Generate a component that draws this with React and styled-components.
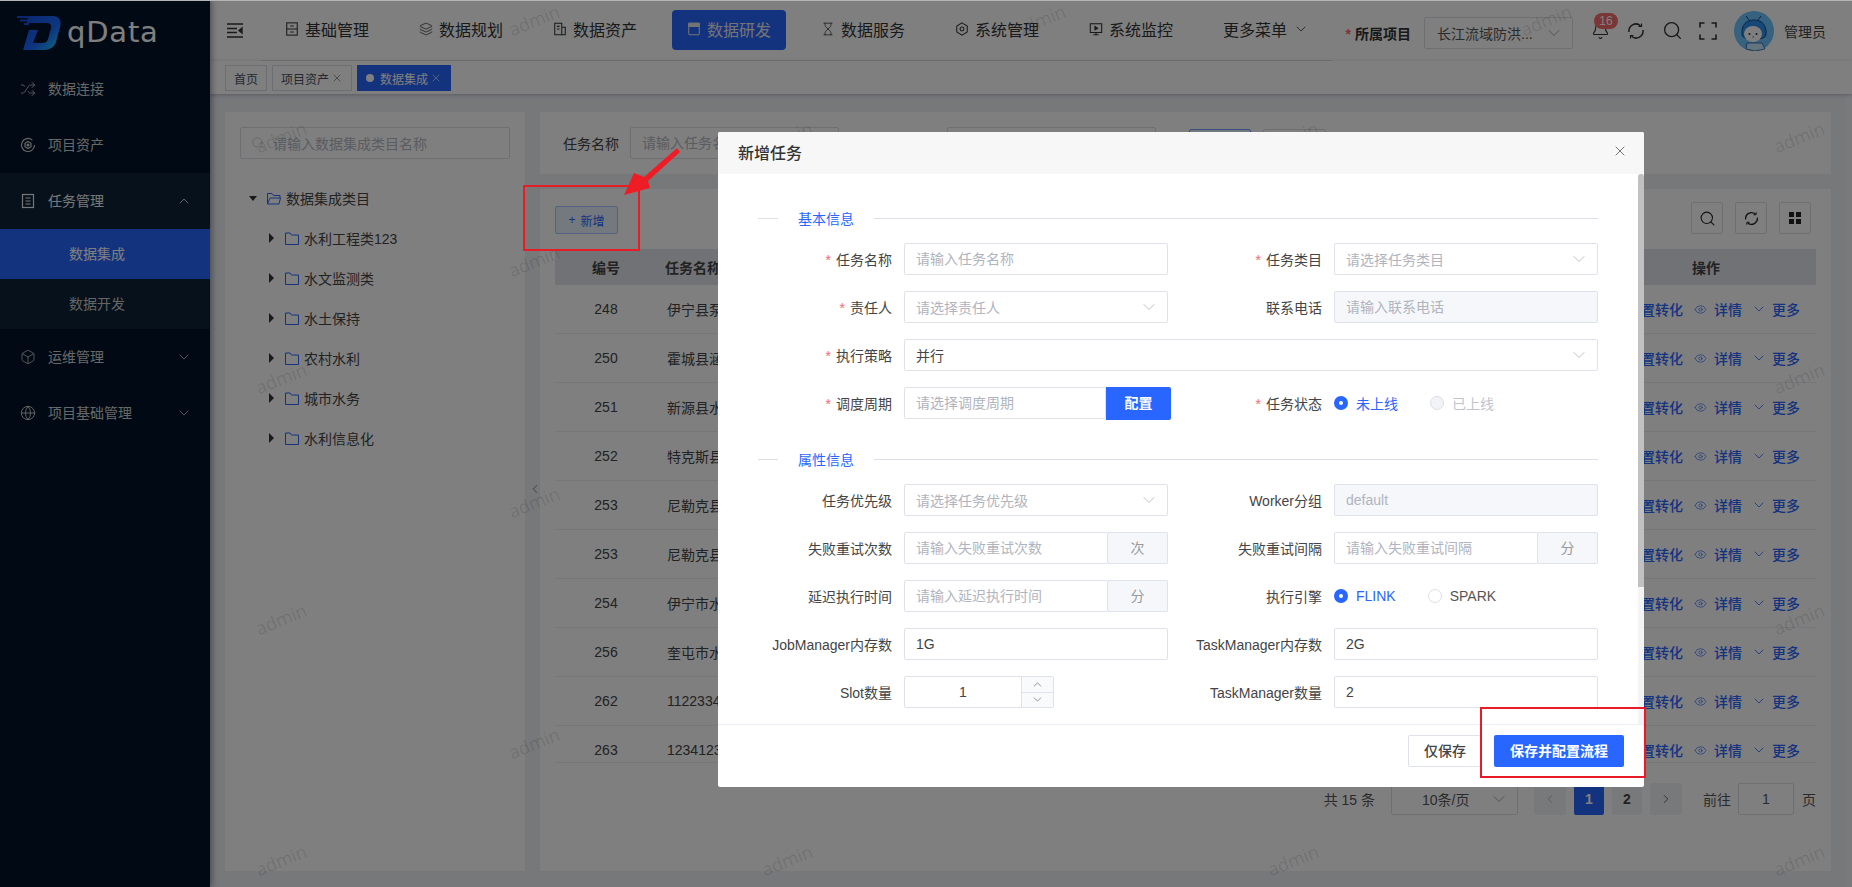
import React from "react";
import styled, { createGlobalStyle } from "styled-components";
import {
  Bell,
  Box,
  ChevronDown,
  ChevronLeft,
  ChevronRight,
  ChevronUp,
  Eye,
  Globe,
  Hourglass,
  Layers,
  Search,
  Shuffle,
  X,
} from "lucide-react";

const BLUE = "#2866ff";
const FONT = '"Liberation Sans", "Noto Sans CJK SC", sans-serif';

const GlobalStyle = createGlobalStyle`
  html, body { margin: 0; height: 100%; overflow: hidden; }
  body { font-family: ${FONT}; font-size: 14px; color: #333; }
  *, *::before, *::after { box-sizing: border-box; }
  input { font-family: ${FONT}; }
`;

const Page = styled.div`
  position: relative;
  display: flex;
  height: 100vh;
  background: #eef0f5;
`;

/* sidebar */
const Sidebar = styled.aside`
  flex: none;
  width: 210px;
  background: #021428;
  box-shadow: 2px 0 6px rgba(0, 21, 41, 0.4);
  position: relative;
  z-index: 2;
`;
const LogoBar = styled.div`
  height: 61px;
  display: flex;
  align-items: flex-start;
  padding: 16px 0 0 17px;
`;
const LogoText = styled.span`
  margin-left: 6px;
  font-family: "DejaVu Sans", sans-serif;
  font-size: 29px;
  letter-spacing: 0.8px;
  line-height: 32px;
  color: #fff;
`;
const MenuItem = styled.div`
  height: 56px;
  display: flex;
  align-items: center;
  gap: 12px;
  padding: 0 18px 0 20px;
  color: ${(p) => (p.$open ? "#f0f0f0" : "#d0d0d0")};
  background: ${(p) => (p.$open ? "#0e2236" : "transparent")};
  & > span {
    flex: 1;
    padding-bottom: 2px;
  }
`;
const SubItem = styled.div`
  height: 50px;
  display: flex;
  align-items: center;
  padding: 0 0 2px 69px;
  color: ${(p) => (p.$active ? "#fff" : "#c8c8c8")};
  background: ${(p) => (p.$active ? BLUE : "#0e2236")};
`;

/* header */
const Main = styled.div`
  flex: 1;
  min-width: 0;
  display: flex;
  flex-direction: column;
`;
const Header = styled.header`
  height: 61px;
  flex: none;
  display: flex;
  align-items: center;
  background: #fff;
  padding: 0 26px 0 17px;
`;
const Toggle = styled.div`
  display: flex;
  margin-right: 18px;
`;
const Nav = styled.nav`
  height: 61px;
  display: flex;
  align-items: center;
  gap: 20px;
  padding: 0 10px 0 9px;
  border-bottom: 1px solid #dfe6e6;
`;
const NavItem = styled.div`
  width: 114px;
  height: 40px;
  display: flex;
  align-items: center;
  justify-content: ${(p) => (p.$more ? "flex-start" : "center")};
  gap: 6px;
  padding: 0 0 3px ${(p) => (p.$more ? "15px" : "0")};
  border-radius: 4px;
  font-size: 16px;
  white-space: nowrap;
  color: ${(p) => (p.$active ? "#e8e8e8" : "#333")};
  background: ${(p) => (p.$active ? BLUE : "transparent")};
`;
const HeaderRight = styled.div`
  margin-left: auto;
  display: flex;
  align-items: center;
  gap: 18px;
`;
const Project = styled.div`
  display: flex;
  align-items: center;
  gap: 13px;
  margin-top: 4px;
`;
const ProjectLabel = styled.span`
  font-weight: 700;
  white-space: nowrap;
  &::before {
    content: "*";
    color: #f56c6c;
    margin-right: 4px;
  }
`;
const ProjectSelect = styled.div`
  width: 149px;
  height: 32px;
  display: flex;
  align-items: center;
  justify-content: space-between;
  padding: 0 8px 0 12px;
  border: 1px solid #dcdfe6;
  border-radius: 2px;
  color: #555;
  white-space: nowrap;
  & > svg { flex: none; color: #999; }
`;
const IconSlot = styled.div`
  position: relative;
  width: 18px;
  height: 18px;
  display: flex;
  align-items: center;
  justify-content: center;
  color: #333;
  & > svg { flex: none; }
`;
const Badge = styled.span`
  position: absolute;
  left: 3px;
  top: -9px;
  width: 24px;
  height: 16px;
  border-radius: 8px;
  background: #f56c6c;
  color: #fff;
  font-size: 12px;
  line-height: 16px;
  text-align: center;
`;
const AvatarWrap = styled.div`
  margin-left: -1px;
  display: flex;
  align-items: center;
  gap: 10px;
  white-space: nowrap;
  color: #444;
`;

/* tabs */
const TabBar = styled.div`
  height: 33px;
  flex: none;
  display: flex;
  gap: 5px;
  padding: 4px 0 0 15px;
  background: #fff;
  box-shadow: 0 1px 4px rgba(0, 21, 41, 0.25);
  position: relative;
  z-index: 1;
`;
const Tab = styled.div`
  height: 26px;
  display: flex;
  align-items: center;
  gap: 2px;
  padding: 0 8px;
  font-size: 12px;
  color: ${(p) => (p.$active ? "#fff" : "#495060")};
  background: ${(p) => (p.$active ? BLUE : "#fff")};
  border: 1px solid ${(p) => (p.$active ? BLUE : "#d8dce5")};
`;
const Dot = styled.i`
  width: 8px;
  height: 8px;
  border-radius: 50%;
  background: #fff;
  margin-right: 4px;
`;

/* content */
const Content = styled.div`
  position: relative;
  flex: 1;
  min-height: 0;
  display: flex;
  gap: 15px;
  padding: 18px 15px 16px;
  border-right: 6px solid #f3f5f8;
`;
const Card = styled.section`
  background: #fff;
`;
const TreeCard = styled(Card)`
  flex: none;
  width: 300px;
  padding: 15px;
`;
const SearchBox = styled.div`
  height: 32px;
  display: flex;
  align-items: center;
  gap: 8px;
  padding: 0 10px 0 10px;
  border: 1px solid #dcdfe6;
  border-radius: 2px;
  color: #b4b8c2;
`;
const Tree = styled.div`
  margin-top: 19px;
`;
const TreeRow = styled.div`
  height: 40px;
  display: flex;
  align-items: center;
  padding-left: ${(p) => (p.$root ? "9px" : "29px")};
  color: #444;
`;
const Caret = styled.i`
  width: 0;
  height: 0;
  margin-right: ${(p) => (p.$open ? "10px" : "11px")};
  border-style: solid;
  border-color: transparent;
  border-width: ${(p) => (p.$open ? "5px 4px 0" : "5px 0 5px 5px")};
  ${(p) => (p.$open ? "border-top-color: #333;" : "border-left-color: #333;")}
`;
const FolderSvg = styled.svg`
  width: 14px;
  height: 13px;
  margin-right: 5px;
  fill: none;
  stroke: ${BLUE};
  stroke-width: 1;
`;
const Collapse = styled.div`
  position: absolute;
  left: 318px;
  top: 388px;
  display: flex;
  color: #333;
`;

const RightColumn = styled.div`
  flex: 1;
  min-width: 0;
  display: flex;
  flex-direction: column;
  gap: 15px;
`;
const FilterCard = styled(Card)`
  flex: none;
  height: 62px;
  display: flex;
  align-items: center;
  padding: 0 23px;
`;
const FilterLabel = styled.span`
  flex: none;
  width: 56px;
  margin: 0 11px 0 ${(p) => p.$offset || 0}px;
  color: #444;
  white-space: nowrap;
`;
const FilterInput = styled.div`
  flex: none;
  width: 209px;
  height: 32px;
  line-height: 30px;
  padding: 0 11px;
  border: 1px solid #dcdfe6;
  border-radius: 2px;
  color: #b4b8c2;
`;
const FilterButton = styled.div`
  flex: none;
  width: ${(p) => p.$w}px;
  height: 28px;
  margin-left: ${(p) => p.$ml}px;
  line-height: 26px;
  text-align: center;
  font-size: 12px;
  border: 1px solid ${(p) => (p.$primary ? "#6f9bff" : "#dcdfe6")};
  background: ${(p) => (p.$primary ? "#e9f0ff" : "#fff")};
  color: ${(p) => (p.$primary ? BLUE : "#444")};
  border-radius: 2px;
`;
const TableCard = styled(Card)`
  flex: 1;
  min-height: 0;
  padding: 13px 15px;
`;
const Toolbar = styled.div`
  height: 32px;
  display: flex;
  align-items: flex-end;
  justify-content: space-between;
  padding-right: 5px;
`;
const AddButton = styled.div`
  width: 63px;
  height: 28px;
  display: flex;
  align-items: center;
  justify-content: center;
  gap: 5px;
  font-size: 12px;
  color: ${BLUE};
  background: #e9f0ff;
  border: 1px solid #a9c2ff;
  border-radius: 2px;
`;
const ToolGroup = styled.div`
  display: flex;
  gap: 12px;
`;
const ToolButton = styled.div`
  width: 32px;
  height: 32px;
  display: flex;
  align-items: center;
  justify-content: center;
  color: #222;
  border: 1px solid #dcdfe6;
  border-radius: 2px;
`;
const TableHead = styled.div`
  margin-top: 15px;
  height: 36px;
  display: flex;
  align-items: center;
  background: #e2e4ea;
  font-weight: 700;
  color: #444;
`;
const TableBody = styled.div`
  height: 478px;
  overflow: hidden;
  border-bottom: 1px solid #ebeef5;
`;
const Row = styled.div`
  height: 49px;
  display: flex;
  align-items: center;
  border-bottom: 1px solid #ebeef5;
  color: #444;
`;
const IdCell = styled.div`
  flex: none;
  width: 102px;
  text-align: center;
`;
const NameCell = styled.div`
  flex: 1;
  padding-left: ${(p) => (p.$head ? "8px" : "10px")};
  white-space: nowrap;
  overflow: hidden;
`;
const HeadAction = styled.div`
  flex: none;
  padding-right: 96px;
`;
const Actions = styled.div`
  flex: none;
  display: flex;
  align-items: center;
  padding-right: 16px;
  color: ${BLUE};
  font-weight: 500;
`;
const ActionGap = styled.span`
  display: flex;
  margin: 0 ${(p) => p.$r}px 0 ${(p) => p.$l}px;
`;
const Pager = styled.div`
  margin-top: 20px;
  height: 32px;
  display: flex;
  align-items: center;
  justify-content: flex-end;
  color: #555;
`;
const PageSize = styled.div`
  width: 127px;
  height: 32px;
  margin: 0 16px;
  display: flex;
  align-items: center;
  justify-content: space-between;
  padding: 0 8px 0 30px;
  border: 1px solid #dcdfe6;
  border-radius: 2px;
  & > svg { flex: none; color: #999; }
`;
const PageButton = styled.div`
  width: ${(p) => (p.$nav ? 32 : 30)}px;
  height: 32px;
  margin-right: 8px;
  display: flex;
  align-items: center;
  justify-content: center;
  border-radius: 2px;
  font-weight: 700;
  color: ${(p) => (p.$active ? "#fff" : p.$muted ? "#aaa" : "#444")};
  background: ${(p) => (p.$active ? BLUE : "#f1f2f5")};
`;
const PageJump = styled.div`
  width: 56px;
  height: 32px;
  margin: 0 8px 0 7px;
  line-height: 30px;
  text-align: center;
  border: 1px solid #dcdfe6;
  border-radius: 2px;
`;
const PageLabel = styled.span`
  margin-left: ${(p) => p.$ml || 0}px;
`;

/* watermark */
const WatermarkLayer = styled.div`
  position: absolute;
  inset: 0;
  overflow: hidden;
  pointer-events: none;
  z-index: 3;
`;
const Mark = styled.span`
  position: absolute;
  transform: translate(-50%, -50%) rotate(-22deg);
  font-family: "Open Sans", sans-serif;
  font-size: 18px;
  line-height: 1;
  color: rgba(0, 0, 0, 0.12);
`;

/* modal */
const Overlay = styled.div`
  position: fixed;
  inset: 0;
  z-index: 10;
  padding: 131px 0 0 718px;
  background: rgba(0, 0, 0, 0.5);
  border-top: 1px solid #b4b4b4;
`;
const Modal = styled.div`
  width: 926px;
  height: 655px;
  display: flex;
  flex-direction: column;
  background: #fff;
  border-radius: 2px;
  overflow: hidden;
`;
const ModalHead = styled.div`
  flex: none;
  height: 42px;
  display: flex;
  align-items: center;
  justify-content: space-between;
  padding: 0 16px 0 20px;
  background: #f7f7f7;
  color: #333;
  & > b {
    font-size: 16px;
    font-weight: 500;
    padding-bottom: 3px;
  }
  & > svg { margin-bottom: 4px; }
`;
const ModalBody = styled.div`
  position: relative;
  flex: 1;
  min-height: 0;
  overflow: hidden;
  padding: 34px 46px 0 40px;
`;
const ScrollTrack = styled.div`
  position: absolute;
  top: 0;
  right: 0;
  bottom: 0;
  width: 6px;
  background: #f4f4f4;
`;
const ScrollThumb = styled.div`
  height: 413px;
  background: #c1c1c1;
  border-radius: 3px 3px 0 0;
`;
const SectionTitle = styled.div`
  height: 20px;
  margin-bottom: 15px;
  display: flex;
  align-items: center;
  gap: 20px;
  color: ${BLUE};
  &::before,
  &::after {
    content: "";
    height: 1px;
    background: #dcdfe6;
  }
  &::before { width: 20px; }
  &::after { flex: 1; }
`;
const FormGrid = styled.div`
  display: grid;
  grid-template-columns: 410px 410px;
  column-gap: 20px;
  row-gap: 16px;
  margin-bottom: 30px;
`;
const FieldRow = styled.div`
  display: flex;
  align-items: center;
  height: 32px;
  grid-column: ${(p) => (p.$wide ? "1 / -1" : "auto")};
`;
const FieldLabel = styled.label`
  flex: none;
  width: 146px;
  padding-right: 12px;
  text-align: right;
  color: #444;
  white-space: nowrap;
  ${(p) =>
    p.$required &&
    `&::before { content: "*"; color: #f56c6c; margin-right: 5px; }`}
`;
const TextInput = styled.input`
  flex: 1;
  min-width: 0;
  width: 100%;
  height: 32px;
  padding: 0 11px;
  font-size: 14px;
  color: #444;
  background: ${(p) => (p.disabled ? "#f5f7fa" : "#fff")};
  border: 1px solid #dfe2ea;
  border-radius: 2px;
  outline: none;
  &::placeholder { color: #b0b4be; opacity: 1; }
  &:disabled::placeholder { color: #b0b4be; }
`;
const SelectBox = styled.div`
  flex: 1;
  height: 32px;
  display: flex;
  align-items: center;
  justify-content: space-between;
  padding: 0 8px 0 11px;
  border: 1px solid #dfe2ea;
  border-radius: 2px;
  color: ${(p) => (p.$filled ? "#444" : "#b0b4be")};
  & > svg { flex: none; color: #b0b4be; }
`;
const Addon = styled.div`
  flex: none;
  width: 60px;
  height: 32px;
  line-height: 30px;
  text-align: center;
  color: #999;
  background: #f5f7fa;
  border: 1px solid #dfe2ea;
  border-left: none;
  border-radius: 0 2px 2px 0;
`;
const ConfigInput = styled(TextInput)`
  flex: none;
  width: 202px;
`;
const ConfigButton = styled.div`
  flex: none;
  width: 65px;
  height: 33px;
  line-height: 33px;
  text-align: center;
  font-weight: 700;
  color: #fff;
  background: ${BLUE};
  border-radius: 0 2px 2px 0;
`;
const RadioGroup = styled.div`
  display: flex;
  align-items: center;
  gap: 32px;
`;
const RadioItem = styled.div`
  display: flex;
  align-items: center;
  gap: 8px;
  color: ${(p) => (p.$checked ? BLUE : p.$disabled ? "#c0c4cc" : "#555")};
  &::before {
    content: "";
    width: 14px;
    height: 14px;
    border-radius: 50%;
    background: ${(p) => (p.$disabled ? "#f1f3f7" : "#fff")};
    border: 1px solid #dcdfe6;
    ${(p) => p.$checked && `border: 5px solid ${BLUE};`}
  }
`;
const NumberBox = styled.div`
  flex: none;
  width: 150px;
  height: 32px;
  display: flex;
  border: 1px solid #dfe2ea;
  border-radius: 2px;
  color: #444;
`;
const NumberValue = styled.div`
  flex: 1;
  line-height: 30px;
  text-align: center;
`;
const Spinner = styled.div`
  flex: none;
  width: 32px;
  display: flex;
  flex-direction: column;
  border-left: 1px solid #dfe2ea;
  background: #f9fafc;
  color: #666;
  & > span {
    flex: 1;
    display: flex;
    align-items: center;
    justify-content: center;
  }
  & > span + span { border-top: 1px solid #dfe2ea; }
`;
const ModalFoot = styled.div`
  flex: none;
  height: 63px;
  display: flex;
  align-items: flex-start;
  justify-content: flex-end;
  gap: 12px;
  padding: 10px 20px 0;
  border-top: 1px solid #ebeef5;
`;
const FootButton = styled.div`
  height: 32px;
  width: ${(p) => (p.$primary ? 130 : 74)}px;
  line-height: ${(p) => (p.$primary ? 32 : 30)}px;
  text-align: center;
  border-radius: 2px;
  font-weight: ${(p) => (p.$primary ? 700 : 500)};
  color: ${(p) => (p.$primary ? "#fff" : "#444")};
  background: ${(p) => (p.$primary ? BLUE : "#fff")};
  border: ${(p) => (p.$primary ? "none" : "1px solid #dfe2ea")};
`;

/* annotations drawn on top of the screenshot */
const RedBox = styled.div`
  position: fixed;
  left: ${(p) => p.$x}px;
  top: ${(p) => p.$y}px;
  width: ${(p) => p.$w}px;
  height: ${(p) => p.$h}px;
  border: 2px solid #e81c26;
  z-index: 20;
  pointer-events: none;
`;
const ArrowSvg = styled.svg`
  position: fixed;
  left: 620px;
  top: 145px;
  width: 64px;
  height: 56px;
  z-index: 20;
  pointer-events: none;
`;

/* drawn icons */
const Line = ({ size = 14, children }) => (
  <svg width={size} height={size} viewBox="0 0 16 16" fill="none" stroke="currentColor" strokeWidth="1.2">
    {children}
  </svg>
);
const ToggleIcon = () => (
  <svg width="16" height="15" viewBox="0 0 16 15" fill="none" stroke="#333" strokeWidth="1.4">
    <path d="M0 1h16M0 5.5h10M0 9.5h10M0 14h16" />
    <path d="M15 5l-3 2.5 3 2.5z" fill="#333" />
  </svg>
);
const BaseIcon = () => (
  <Line>
    <rect x="2" y="1" width="12" height="14" />
    <path d="M2 8h12M6 4.5h4M6 11.5h4" />
  </Line>
);
const AssetIcon = () => (
  <Line>
    <path d="M2 1.5h8v13H2zM10 6h4v8.5H2M4.5 5h3M4.5 8h3" />
  </Line>
);
const DevIcon = () => (
  <Line>
    <rect x="2" y="1.5" width="12" height="13" rx="1" />
    <path d="M2 1.5h12v3.5H2z" fill="currentColor" />
  </Line>
);
const SettingIcon = () => (
  <Line>
    <path d="M8 1l6 3.5v7L8 15l-6-3.5v-7z" />
    <circle cx="8" cy="8" r="2.2" />
  </Line>
);
const MonitorIcon = () => (
  <Line>
    <rect x="1.5" y="2" width="13" height="10" />
    <path d="M5 14.5h6M8 12v2.5" />
    <path d="M6.8 5.2l3 1.8-3 1.8z" fill="currentColor" />
  </Line>
);
const ListIcon = () => (
  <Line size={16}>
    <rect x="2.5" y="1.5" width="11" height="13" />
    <path d="M5.5 5h5M5.5 8h5M5.5 11h5" />
  </Line>
);
const AssetRingIcon = () => (
  <Line size={16}>
    <path d="M14.5 8a6.5 6.5 0 1 1-2.2-4.9" />
    <path d="M8 4.5l3 1.8v3.4L8 11.5 5 9.7V6.3z" />
    <circle cx="8" cy="8" r="1" fill="currentColor" />
  </Line>
);
const RingRefresh = ({ size = 18 }) => (
  <svg width={size} height={size} viewBox="0 0 18 18" fill="none" stroke="currentColor" strokeWidth="1.5">
    <path d="M2 10a7 7 0 0 1 11.5-6.3" />
    <path d="M16 8a7 7 0 0 1-11.5 6.3" />
    <path d="M14.5 1.5v3h-3M3.5 16.5v-3h3" strokeWidth="1.2" />
  </svg>
);
const FullscreenIcon = () => (
  <svg width="18" height="18" viewBox="0 0 18 18" fill="none" stroke="currentColor" strokeWidth="1.6">
    <path d="M1 5.5V1h4.5M12.5 1H17v4.5M17 12.5V17h-4.5M5.5 17H1v-4.5" />
  </svg>
);
const GridIcon = () => (
  <svg width="14" height="14" viewBox="0 0 14 14" fill="currentColor">
    <rect x="1" y="1" width="5" height="5" />
    <rect x="8" y="1" width="5" height="5" />
    <rect x="1" y="8" width="5" height="5" />
    <rect x="8" y="8" width="5" height="5" />
  </svg>
);
const Folder = ({ open }) => (
  <FolderSvg viewBox="0 0 14 13">
    {open ? (
      <path d="M.5 12V1.5h4.5l1.5 2h6.5V6M.5 12L3 6h10.5L12 12z" />
    ) : (
      <path d="M.5 12.5V1h4.5l1.5 2h7v9.5z" />
    )}
  </FolderSvg>
);
const LogoMark = () => (
  <svg width="44" height="34" viewBox="0 0 44 34">
    <defs>
      <linearGradient id="logoD" x1="0" y1="0" x2="1" y2="1">
        <stop offset="0" stopColor="#1450e0" />
        <stop offset="0.6" stopColor="#1a6cff" />
        <stop offset="1" stopColor="#20d8ff" />
      </linearGradient>
    </defs>
    <path
      fillRule="evenodd"
      fill="url(#logoD)"
      d="M11 0H36C42 0 45 5 43 11L39 26C38 31 32 34 27 34H6L12 14H21L16 27H25C28 27 30 26 31 23L34 12C35 9 33 7 30 7H10z"
    />
    <path d="M0 0h14v2H0zM3 3.5h13v2H3zM7 7h5v2H7z" fill="#1450e0" />
  </svg>
);
const Avatar = () => (
  <svg width="40" height="40" viewBox="0 0 40 40">
    <circle cx="20" cy="20" r="20" fill="#6cc4ff" />
    <path d="M8 24C7 13 13 9 20 9s13 4 12 15c-1 6-23 6-24 0z" fill="#2f8fe8" stroke="#104a90" />
    <ellipse cx="19" cy="23" rx="9" ry="8" fill="#fff" />
    <circle cx="15.5" cy="23" r="1" fill="#234" />
    <circle cx="22.5" cy="23" r="1" fill="#234" />
    <path d="M18.5 26h1.5" stroke="#234" strokeWidth="0.8" />
    <path d="M13 32h15l3 6-10 2-9-2z" fill="#c8e8ff" stroke="#104a90" strokeWidth="0.7" />
    <path d="M15 9l-3-4M24 9l3-4" stroke="#104a90" strokeWidth="1" />
  </svg>
);

const navItems = [
  { name: "基础管理", icon: <BaseIcon /> },
  { name: "数据规划", icon: <Layers size={14} strokeWidth={1.3} /> },
  { name: "数据资产", icon: <AssetIcon /> },
  { name: "数据研发", icon: <DevIcon />, active: true },
  { name: "数据服务", icon: <Hourglass size={14} strokeWidth={1.3} /> },
  { name: "系统管理", icon: <SettingIcon /> },
  { name: "系统监控", icon: <MonitorIcon /> },
];

const treeItems = ["水利工程类123", "水文监测类", "水土保持", "农村水利", "城市水务", "水利信息化"];

const rows = [
  ["248", "伊宁县泵站"],
  ["250", "霍城县涵闸"],
  ["251", "新源县水库"],
  ["252", "特克斯县水"],
  ["253", "尼勒克县水"],
  ["253", "尼勒克县水"],
  ["254", "伊宁市水利"],
  ["256", "奎屯市水利"],
  ["262", "112233445"],
  ["263", "123412345"],
];

// watermark tile: two staggered marks per 506x241 block
const marks = [];
for (let col = 0; col < 7; col++) {
  for (let row = 0; row < 4; row++) {
    marks.push({ x: 281 + 253 * col, y: (col % 2 ? 20 : 137) + 241 * row });
  }
}

function Field({ label, required, wide, children }) {
  return (
    <FieldRow $wide={wide}>
      <FieldLabel $required={required}>{label}</FieldLabel>
      {children}
    </FieldRow>
  );
}

function Select({ value, placeholder }) {
  return (
    <SelectBox $filled={!!value}>
      {value || placeholder}
      <ChevronDown size={20} strokeWidth={1} />
    </SelectBox>
  );
}

export default function App() {
  return (
    <>
      <GlobalStyle />
      <Page>
        <Sidebar>
          <LogoBar>
            <LogoMark />
            <LogoText>qData</LogoText>
          </LogoBar>
          <MenuItem>
            <Shuffle size={16} strokeWidth={1.2} />
            <span>数据连接</span>
          </MenuItem>
          <MenuItem>
            <AssetRingIcon />
            <span>项目资产</span>
          </MenuItem>
          <MenuItem $open>
            <ListIcon />
            <span>任务管理</span>
            <ChevronUp size={16} strokeWidth={1.2} />
          </MenuItem>
          <SubItem $active>数据集成</SubItem>
          <SubItem>数据开发</SubItem>
          <MenuItem>
            <Box size={16} strokeWidth={1.2} />
            <span>运维管理</span>
            <ChevronDown size={16} strokeWidth={1.2} />
          </MenuItem>
          <MenuItem>
            <Globe size={16} strokeWidth={1.4} />
            <span>项目基础管理</span>
            <ChevronDown size={16} strokeWidth={1.2} />
          </MenuItem>
        </Sidebar>

        <Main>
          <Header>
            <Toggle>
              <ToggleIcon />
            </Toggle>
            <Nav>
              {navItems.map((item) => (
                <NavItem key={item.name} $active={item.active}>
                  {item.icon}
                  {item.name}
                </NavItem>
              ))}
              <NavItem $more>
                更多菜单
                <ChevronDown size={16} strokeWidth={1.2} />
              </NavItem>
            </Nav>
            <HeaderRight>
              <Project>
                <ProjectLabel>所属项目</ProjectLabel>
                <ProjectSelect>
                  长江流域防洪...
                  <ChevronDown size={20} strokeWidth={1} />
                </ProjectSelect>
              </Project>
              <IconSlot>
                <Bell size={19} strokeWidth={1.4} />
                <Badge>16</Badge>
              </IconSlot>
              <IconSlot>
                <RingRefresh />
              </IconSlot>
              <IconSlot>
                <Search size={21} strokeWidth={1.5} />
              </IconSlot>
              <IconSlot>
                <FullscreenIcon />
              </IconSlot>
              <AvatarWrap>
                <Avatar />
                管理员
              </AvatarWrap>
            </HeaderRight>
          </Header>

          <TabBar>
            <Tab>首页</Tab>
            <Tab>
              项目资产
              <X size={12} strokeWidth={1.2} />
            </Tab>
            <Tab $active>
              <Dot />
              数据集成
              <X size={12} strokeWidth={1.2} />
            </Tab>
          </TabBar>

          <Content>
            <TreeCard>
              <SearchBox>
                <Search size={14} strokeWidth={1.2} />
                请输入数据集成类目名称
              </SearchBox>
              <Tree>
                <TreeRow $root>
                  <Caret $open />
                  <Folder open />
                  数据集成类目
                </TreeRow>
                {treeItems.map((name) => (
                  <TreeRow key={name}>
                    <Caret />
                    <Folder />
                    {name}
                  </TreeRow>
                ))}
              </Tree>
            </TreeCard>
            <Collapse>
              <ChevronLeft size={14} strokeWidth={1} />
            </Collapse>

            <RightColumn>
              <FilterCard>
                <FilterLabel>任务名称</FilterLabel>
                <FilterInput>请输入任务名称</FilterInput>
                <FilterLabel $offset={41}>任务类目</FilterLabel>
                <FilterInput>请选择任务类目</FilterInput>
                <FilterButton $primary $w={62} $ml={33}>
                  搜索
                </FilterButton>
                <FilterButton $w={63} $ml={12}>
                  重置
                </FilterButton>
              </FilterCard>

              <TableCard>
                <Toolbar>
                  <AddButton>
                    <span>+</span>
                    新增
                  </AddButton>
                  <ToolGroup>
                    <ToolButton>
                      <Search size={17} strokeWidth={1.5} />
                    </ToolButton>
                    <ToolButton>
                      <RingRefresh size={15} />
                    </ToolButton>
                    <ToolButton>
                      <GridIcon />
                    </ToolButton>
                  </ToolGroup>
                </Toolbar>
                <TableHead>
                  <IdCell>编号</IdCell>
                  <NameCell $head>任务名称</NameCell>
                  <HeadAction>操作</HeadAction>
                </TableHead>
                <TableBody>
                  {rows.map(([id, name], i) => (
                    <Row key={i}>
                      <IdCell>{id}</IdCell>
                      <NameCell>{name}</NameCell>
                      <Actions>
                        配置转化
                        <ActionGap $l={11} $r={7}>
                          <Eye size={13} strokeWidth={1.2} />
                        </ActionGap>
                        详情
                        <ActionGap $l={9} $r={5}>
                          <ChevronDown size={16} strokeWidth={1.2} />
                        </ActionGap>
                        更多
                      </Actions>
                    </Row>
                  ))}
                </TableBody>
                <Pager>
                  <span>共 15 条</span>
                  <PageSize>
                    10条/页
                    <ChevronDown size={20} strokeWidth={1} />
                  </PageSize>
                  <PageButton $nav $muted>
                    <ChevronLeft size={14} strokeWidth={1.4} />
                  </PageButton>
                  <PageButton $active>1</PageButton>
                  <PageButton>2</PageButton>
                  <PageButton $nav>
                    <ChevronRight size={14} strokeWidth={1.4} />
                  </PageButton>
                  <PageLabel $ml={13}>前往</PageLabel>
                  <PageJump>1</PageJump>
                  <PageLabel>页</PageLabel>
                </Pager>
              </TableCard>
            </RightColumn>
          </Content>
        </Main>

        <WatermarkLayer>
          {marks.map((m) => (
            <Mark key={`${m.x}-${m.y}`} style={{ left: m.x, top: m.y }}>
              admin
            </Mark>
          ))}
        </WatermarkLayer>
      </Page>

      <Overlay>
        <Modal>
          <ModalHead>
            <b>新增任务</b>
            <X size={16} strokeWidth={1} />
          </ModalHead>
          <ModalBody>
            <SectionTitle>基本信息</SectionTitle>
            <FormGrid>
              <Field label="任务名称" required>
                <TextInput placeholder="请输入任务名称" />
              </Field>
              <Field label="任务类目" required>
                <Select placeholder="请选择任务类目" />
              </Field>
              <Field label="责任人" required>
                <Select placeholder="请选择责任人" />
              </Field>
              <Field label="联系电话">
                <TextInput disabled placeholder="请输入联系电话" />
              </Field>
              <Field label="执行策略" required wide>
                <Select value="并行" />
              </Field>
              <Field label="调度周期" required>
                <ConfigInput placeholder="请选择调度周期" />
                <ConfigButton>配置</ConfigButton>
              </Field>
              <Field label="任务状态" required>
                <RadioGroup>
                  <RadioItem $checked>未上线</RadioItem>
                  <RadioItem $disabled>已上线</RadioItem>
                </RadioGroup>
              </Field>
            </FormGrid>
            <SectionTitle>属性信息</SectionTitle>
            <FormGrid>
              <Field label="任务优先级">
                <Select placeholder="请选择任务优先级" />
              </Field>
              <Field label="Worker分组">
                <TextInput disabled placeholder="default" />
              </Field>
              <Field label="失败重试次数">
                <TextInput placeholder="请输入失败重试次数" />
                <Addon>次</Addon>
              </Field>
              <Field label="失败重试间隔">
                <TextInput placeholder="请输入失败重试间隔" />
                <Addon>分</Addon>
              </Field>
              <Field label="延迟执行时间">
                <TextInput placeholder="请输入延迟执行时间" />
                <Addon>分</Addon>
              </Field>
              <Field label="执行引擎">
                <RadioGroup>
                  <RadioItem $checked>FLINK</RadioItem>
                  <RadioItem>SPARK</RadioItem>
                </RadioGroup>
              </Field>
              <Field label="JobManager内存数">
                <TextInput defaultValue="1G" />
              </Field>
              <Field label="TaskManager内存数">
                <TextInput defaultValue="2G" />
              </Field>
              <Field label="Slot数量">
                <NumberBox>
                  <NumberValue>1</NumberValue>
                  <Spinner>
                    <span>
                      <ChevronUp size={13} strokeWidth={1.3} />
                    </span>
                    <span>
                      <ChevronDown size={13} strokeWidth={1.3} />
                    </span>
                  </Spinner>
                </NumberBox>
              </Field>
              <Field label="TaskManager数量">
                <TextInput defaultValue="2" />
              </Field>
            </FormGrid>
            <ScrollTrack>
              <ScrollThumb />
            </ScrollTrack>
          </ModalBody>
          <ModalFoot>
            <FootButton>仅保存</FootButton>
            <FootButton $primary>保存并配置流程</FootButton>
          </ModalFoot>
        </Modal>
      </Overlay>

      <RedBox $x={523} $y={185} $w={117} $h={66} />
      <RedBox $x={1480} $y={707} $w={166} $h={71} />
      <ArrowSvg viewBox="0 0 64 56">
        <path d="M57 3L60 7L28 36L30 43L4 50L14 28L24 32z" fill="#ee1c25" />
      </ArrowSvg>
    </>
  );
}
